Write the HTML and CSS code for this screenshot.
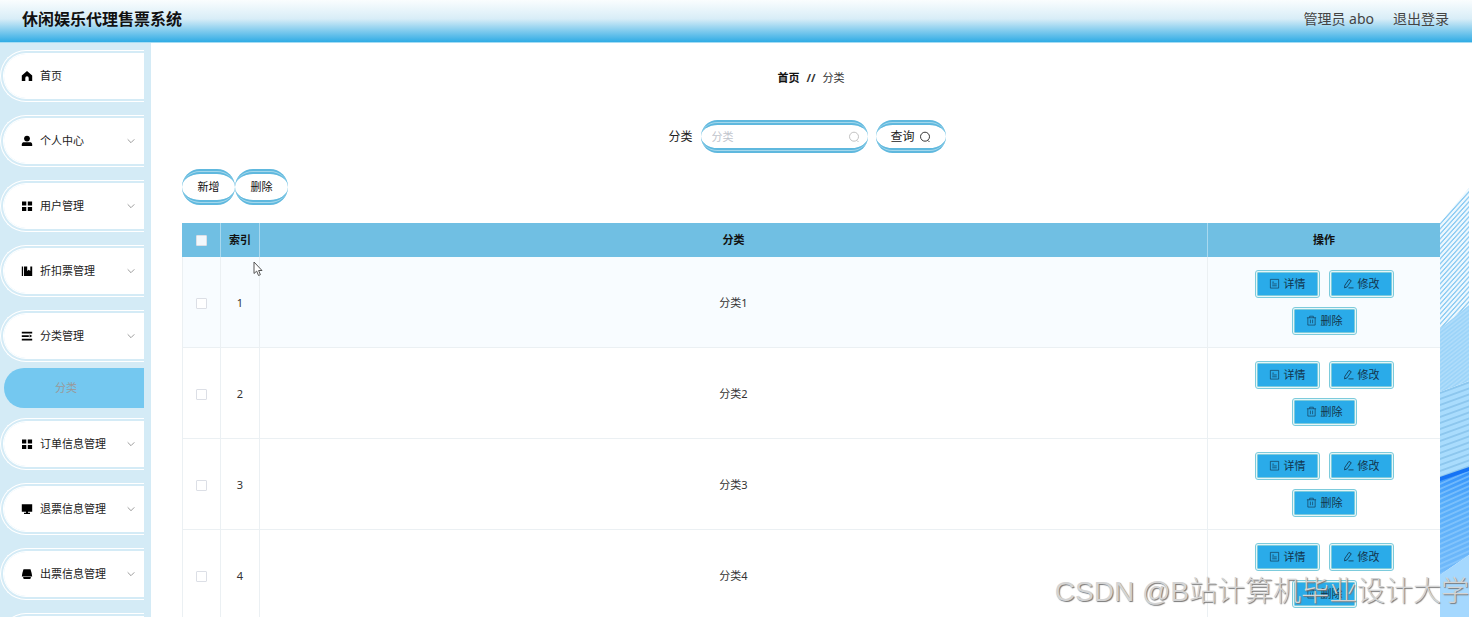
FILE: index.html
```html
<!DOCTYPE html>
<html lang="zh-CN">
<head>
<meta charset="utf-8">
<title>休闲娱乐代理售票系统</title>
<link rel="stylesheet" href="styles.css">
</head>
<body>
<svg class="sprite" aria-hidden="true">
  <symbol id="home" viewBox="0 0 12 12"><path d="M6 1 .8 5.400V11h3.500V8a1.700 1.700 0 0 1 3.400 0v3h3.500V5.400z"/></symbol>
  <symbol id="user" viewBox="0 0 12 12"><circle cx="6" cy="3.600" r="2.900"/><path d="M.8 11V9.400c0-1.600 1-2.200 2.400-2.200h5.600c1.400 0 2.400.6 2.400 2.200V11z"/></symbol>
  <symbol id="grid" viewBox="0 0 12 12"><path d="M1 1.500h4.300v4H1zM6.800 1.500h4.300v4H6.800zM1 7h4.300v4H1zM6.800 7h4.300v4H6.800z"/></symbol>
  <symbol id="book" viewBox="0 0 12 12"><path d="M.8 1.500h1.300V11H.8zM3 1.500h3.200V6l1.600-1.200L9.300 6V1.500h1.900V11H3z"/></symbol>
  <symbol id="list" viewBox="0 0 12 12"><path d="M.8 1.800h10.400v1.700H.8zM.8 5.200h7v1.700h-7zM8.600 4.600 11.200 6 8.600 7.400zM.8 8.700h10.400v1.700H.8z"/></symbol>
  <symbol id="monitor" viewBox="0 0 12 12"><path d="M.8 1.300h10.400v7.500H7v1h2V11H3V9.800h2v-1H.8z"/></symbol>
  <symbol id="printer" viewBox="0 0 12 12"><path d="M2.500 1.300h7L10.600 5l.6 3.500H.8L1.400 5zM2.200 9h7.600v1.200l-.8.8H3l-.8-.8z"/></symbol>
  <symbol id="down" viewBox="0 0 12 12"><path d="m2 4 4 4 4-4" fill="none" stroke="currentColor"/></symbol>
  <symbol id="search" viewBox="0 0 12 12"><g fill="none" stroke="currentColor" stroke-width=".9"><circle cx="6" cy="5.700" r="4.500"/><path d="m9 9.500 1.500 1.500"/></g></symbol>
  <symbol id="doc" viewBox="0 0 12 12"><path d="M1.500 1.500h9v9.500h-9zM3.500 4.500h2M3.500 6.500h5M3.500 8.500h5" fill="none" stroke="currentColor" stroke-width=".7"/></symbol>
  <symbol id="edit" viewBox="0 0 12 12"><path d="M2 8 6.500 1.500 9 3 4.400 9.700 1.700 10.800zM6 10.800h5.500" fill="none" stroke="currentColor" stroke-width=".9"/></symbol>
  <symbol id="trash" viewBox="0 0 12 12"><path d="M1 3h10M4 3V1.300h4V3M2 3v8h8V3M4.800 5v4M7.200 5v4" fill="none" stroke="currentColor" stroke-width=".7"/></symbol>
</svg>

<header class="topbar">
  <h1 class="brand">休闲娱乐代理售票系统</h1>
  <div class="account"><span>管理员 abo</span><a href="#">退出登录</a></div>
</header>

<div class="layout">
  <nav class="sidebar">
    <a class="item" href="#"><svg class="icon"><use href="#home"/></svg><span>首页</span></a>
    <a class="item" href="#"><svg class="icon"><use href="#user"/></svg><span>个人中心</span><svg class="arrow"><use href="#down"/></svg></a>
    <a class="item" href="#"><svg class="icon"><use href="#grid"/></svg><span>用户管理</span><svg class="arrow"><use href="#down"/></svg></a>
    <a class="item" href="#"><svg class="icon"><use href="#book"/></svg><span>折扣票管理</span><svg class="arrow"><use href="#down"/></svg></a>
    <div class="group">
      <a class="item" href="#"><svg class="icon"><use href="#list"/></svg><span>分类管理</span><svg class="arrow"><use href="#down"/></svg></a>
      <a class="subitem" href="#">分类</a>
    </div>
    <a class="item" href="#"><svg class="icon"><use href="#grid"/></svg><span>订单信息管理</span><svg class="arrow"><use href="#down"/></svg></a>
    <a class="item" href="#"><svg class="icon"><use href="#monitor"/></svg><span>退票信息管理</span><svg class="arrow"><use href="#down"/></svg></a>
    <a class="item" href="#"><svg class="icon"><use href="#printer"/></svg><span>出票信息管理</span><svg class="arrow"><use href="#down"/></svg></a>
    <div class="item"></div>
  </nav>

  <main class="main">
    <svg class="art" viewBox="0 0 29 429" preserveAspectRatio="none" aria-hidden="true">
      <defs>
        <pattern id="steep" width="29" height="5" patternUnits="userSpaceOnUse" patternTransform="skewY(-48)"><path d="M0 1h29" stroke="#8fcdf3" stroke-width="2"/></pattern>
        <pattern id="mid" width="29" height="4" patternUnits="userSpaceOnUse" patternTransform="skewY(-38)"><path d="M0 1h29" stroke="#8accf7"/></pattern>
        <pattern id="flat" width="29" height="6" patternUnits="userSpaceOnUse" patternTransform="skewY(-20)"><path d="M0 1h29" stroke="#7dbbe6" stroke-width="1.300"/></pattern>
        <pattern id="pale" width="29" height="5" patternUnits="userSpaceOnUse" patternTransform="skewY(-24)"><path d="M0 1h29" stroke="#9dd2ff"/></pattern>
        <linearGradient id="deep" x2="0" y2="1"><stop offset="0" stop-color="#2f8ffb"/><stop offset=".3" stop-color="#55acfa"/><stop offset="1" stop-color="#72bafa"/></linearGradient>
      </defs>
      <path d="M0 35 29 0V117L0 141z" fill="#eef8fe"/>
      <path d="M0 35 29 0V117L0 141z" fill="url(#steep)"/>
      <path d="M0 141 29 117V193L0 204z" fill="#aedcfa"/>
      <path d="M0 141 29 117V193L0 204z" fill="url(#mid)"/>
      <path d="M0 204 29 193V280L0 291z" fill="#a9dcfd"/>
      <path d="M0 204 29 193V280L0 291z" fill="url(#flat)"/>
      <path d="M0 291 29 280V367L0 387z" fill="url(#deep)"/>
      <path d="M0 291 29 280V367L0 387z" fill="url(#pale)"/>
      <path d="M0 289 29 279V283L0 293z" fill="#1573f5"/>
      <path d="M0 387 29 367V429H0z" fill="#a5d8fe"/>
    </svg>

    <div class="crumbs"><a href="#">首页</a><b>//</b><span>分类</span></div>

    <form class="search">
      <label for="kind">分类</label>
      <span class="field"><input id="kind" type="text" placeholder="分类"><svg class="icon"><use href="#search"/></svg></span>
      <button class="pill query" type="button">查询<svg class="icon"><use href="#search"/></svg></button>
    </form>

    <div class="tools">
      <button class="pill" type="button">新增</button>
      <button class="pill" type="button">删除</button>
    </div>

    <table class="grid">
      <colgroup><col class="narrow"><col class="narrow"><col><col class="ops"></colgroup>
      <thead><tr><th><input type="checkbox" aria-label="全选"></th><th>索引</th><th>分类</th><th>操作</th></tr></thead>
      <tbody>
        <tr class="hover"><td><input type="checkbox" aria-label="选择 1"></td><td>1</td><td>分类1</td><td><div class="actions"><button type="button"><svg class="icon"><use href="#doc"/></svg>详情</button><button type="button"><svg class="icon"><use href="#edit"/></svg>修改</button><button type="button"><svg class="icon"><use href="#trash"/></svg>删除</button></div></td></tr>
        <tr><td><input type="checkbox" aria-label="选择 2"></td><td>2</td><td>分类2</td><td><div class="actions"><button type="button"><svg class="icon"><use href="#doc"/></svg>详情</button><button type="button"><svg class="icon"><use href="#edit"/></svg>修改</button><button type="button"><svg class="icon"><use href="#trash"/></svg>删除</button></div></td></tr>
        <tr><td><input type="checkbox" aria-label="选择 3"></td><td>3</td><td>分类3</td><td><div class="actions"><button type="button"><svg class="icon"><use href="#doc"/></svg>详情</button><button type="button"><svg class="icon"><use href="#edit"/></svg>修改</button><button type="button"><svg class="icon"><use href="#trash"/></svg>删除</button></div></td></tr>
        <tr><td><input type="checkbox" aria-label="选择 4"></td><td>4</td><td>分类4</td><td><div class="actions"><button type="button"><svg class="icon"><use href="#doc"/></svg>详情</button><button type="button"><svg class="icon"><use href="#edit"/></svg>修改</button><button type="button"><svg class="icon"><use href="#trash"/></svg>删除</button></div></td></tr>
      </tbody>
    </table>
  </main>
</div>

<svg class="pointer" viewBox="0 0 10 16" aria-hidden="true"><path d="M1 1v11.500l2.700-2.400L5.500 14.500l1.900-.8L5.600 9.500H9z" fill="#fff" stroke="#555"/></svg>
<div class="watermark">CSDN @B站计算机毕业设计大学</div>
</body>
</html>
```

FILE: styles.css
```css
* { box-sizing: border-box; }

body {
  margin: 0;
  height: 100vh;
  overflow: hidden;
  display: flex;
  flex-direction: column;
  background: #fff;
  color: #222;
  font: 11px/16px "Noto Sans", "Noto Sans CJK SC", sans-serif;
}

a { color: inherit; text-decoration: none; }
button, input { font: inherit; color: inherit; margin: 0; }
.sprite { display: none; }
.icon { width: 12px; height: 12px; flex: none; fill: currentColor; }

.topbar {
  flex: none;
  height: 43px;
  display: flex;
  align-items: center;
  justify-content: space-between;
  padding: 0 23px 4px 22px;
  border-bottom: 1px solid #a5dcf3;
  background: linear-gradient(#fafdfe, #d8edf7 45%, #30ace5);
}
.brand { margin: 0; font-size: 16px; line-height: 24px; font-weight: 700; color: #111; }
.account { display: flex; gap: 19px; font-size: 14px; line-height: 20px; color: #444; }

.layout { flex: 1; min-height: 0; display: flex; overflow: hidden; }

.sidebar {
  flex: none;
  width: 151px;
  padding: 7px 7px 0 0;
  display: flex;
  flex-direction: column;
  gap: 13px;
  background: #d4ebf6;
}
.item {
  flex: none;
  height: 52px;
  display: flex;
  align-items: center;
  padding: 0 8px 0 17px;
  border: 4px double #fff;
  border-right: 0;
  border-radius: 28px 0 0 28px;
  background: #fff padding-box;
  color: #222;
}
.item .icon { margin-right: 7px; color: #000; }
.arrow { width: 10px; height: 10px; margin-left: auto; color: #888; }
.group { display: flex; flex-direction: column; gap: 6px; margin-bottom: -3px; }
.subitem {
  margin-left: 4px;
  height: 40px;
  padding: 12px 0 12px 51px;
  border-radius: 20px 0 0 20px;
  background: #74c8f0;
  color: #999;
}

.main {
  flex: 1;
  min-width: 0;
  position: relative;
  padding: 27px 32px 0 31px;
  display: flex;
  flex-direction: column;
}
.art { position: absolute; right: 3px; top: 145px; bottom: 0; width: 29px; height: 429px; }

.crumbs { display: flex; justify-content: center; gap: 7px; color: #333; }
.crumbs a { font-weight: 700; color: #111; }

.search {
  display: flex;
  align-items: center;
  justify-content: center;
  gap: 8px;
  margin-top: 34px;
  padding-right: 8px;
  font-size: 12px;
}
.field {
  display: flex;
  align-items: center;
  width: 167px;
  height: 33px;
  padding: 0 8px 0 11px;
  font-size: 11px;
  color: #bbb;
}
.field input { flex: 1; min-width: 0; padding: 0; border: 0; outline: 0; background: none; color: #333; }
.field input::placeholder { color: #c0c4cc; opacity: 1; }

.field, .pill {
  border: 0 double #5fb8de;
  border-width: 5px 0;
  border-radius: 24px;
  background: linear-gradient(#fff, #fff) padding-box, #a5d8ec border-box;
}
.pill { height: 36px; width: 53px; padding: 0; color: #111; }
.query { display: flex; align-items: center; justify-content: center; gap: 4px; width: 70px; height: 33px; color: #222; }

.tools { display: flex; margin-top: 16px; }

.grid { width: 100%; margin-top: 18px; table-layout: fixed; border-collapse: separate; border-spacing: 0; text-align: center; }
.narrow { width: 39px; }
.ops { width: 232px; }
.grid th { height: 34px; padding: 0; background: #70bfe3; border-right: 1px solid #a9d9ef; color: #111; font-weight: 700; }
.grid th:last-child { border-right: 0; }
.grid td { height: 91px; padding: 2px 0 0; background: #fff; border-right: 1px solid #ebf0f3; border-bottom: 1px solid #ebf0f3; color: #333; }
.grid td:first-child { border-left: 1px solid #ebf0f3; }
.grid td:last-child { padding: 0; border-right: 0; }
.grid .hover td { background: #f8fcff; }
.grid input {
  appearance: none;
  display: block;
  width: 11px;
  height: 11px;
  margin: 0 auto;
  border: 1px solid #dcdfe6;
  border-radius: 1px;
  background: #fff;
}
.grid th input { background: #f2f8fc; }

.actions { display: flex; flex-wrap: wrap; justify-content: center; gap: 9px; padding: 0 40px; }
.actions button {
  width: 65px;
  height: 28px;
  padding: 0;
  display: flex;
  align-items: center;
  justify-content: center;
  gap: 4px;
  border: 3px double #7ccbdc;
  border-radius: 3px;
  background: linear-gradient(#2aabe9, #2aabe9) padding-box, #e6f6f8 border-box;
  color: #12344c;
}
.actions .icon { width: 11px; height: 11px; }

.pointer { position: absolute; left: 253px; top: 261px; width: 10px; height: 16px; }
.watermark {
  position: absolute;
  right: 3px;
  bottom: 5px;
  font: 300 28px/40px "Liberation Sans", "Noto Sans CJK SC", sans-serif;
  color: #d4d4d4;
  text-shadow: 1px 1px 1px #777;
  white-space: nowrap;
}
```
